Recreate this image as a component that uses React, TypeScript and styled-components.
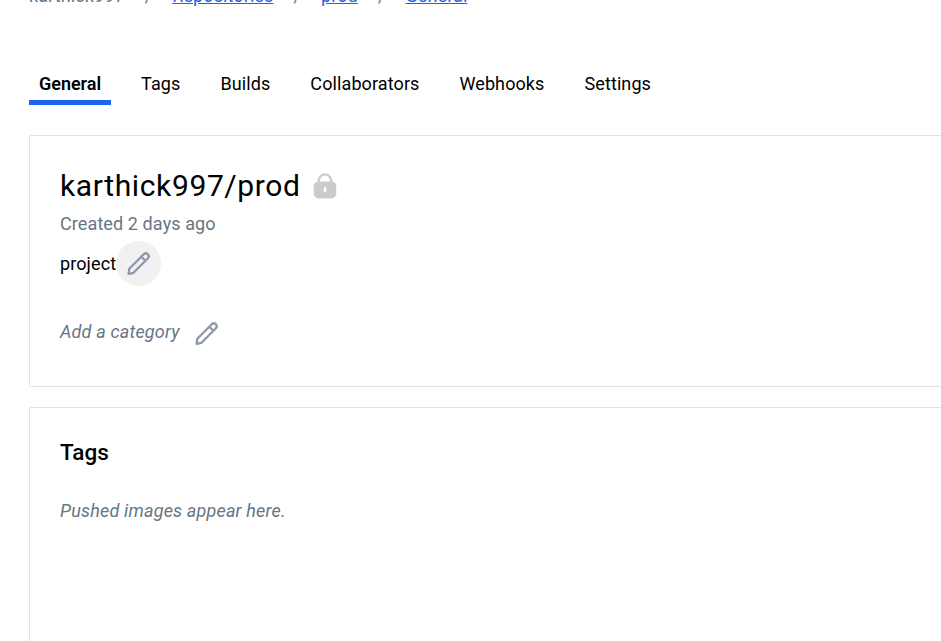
import React from "react";
import styled, { createGlobalStyle } from "styled-components";

const GlobalStyle = createGlobalStyle`
  * { box-sizing: border-box; }
  body { margin: 0; background: #fff; color: #000; font-family: Roboto, sans-serif; font-size: 18px; letter-spacing: 0.1px; overflow: hidden; }
`;
const Page = styled.main`width: 941px; height: 641px; overflow: hidden; padding-left: 29px;`;
const Crumbs = styled.nav`display: flex; height: 65px; margin-top: -15px; line-height: 21px; color: #677584; white-space: pre;`;
const CrumbLink = styled.a`color: #1d63ed; text-decoration: underline;`;
const Slash = styled.span`width: 47.6px; text-align: center;`;
const Tabs = styled.nav`display: flex; height: 55px; margin-bottom: 30px;`;
const Tab = styled.a<{ $active?: boolean }>`
  height: 55px; padding: 23px 10px 0; margin-right: 20px; line-height: 21px;
  font-weight: ${p => (p.$active ? 600 : 400)};
  letter-spacing: ${p => (p.$active ? -0.02 : 0.1)}px;
  border-bottom: 5px solid ${p => (p.$active ? "#1d63ed" : "transparent")};
`;
const Card = styled.section<{ $height: number }>`
  width: 1000px; height: ${p => p.$height}px; margin-bottom: 20px; padding: 29px 30px;
  border: 1px solid #e1e2e6; border-radius: 2px;
`;
const TitleRow = styled.div`display: flex; align-items: center; height: 42px; gap: 12px;`;
const Title = styled.h1`margin: -2px 0 0; font-size: 30px; font-weight: 400; letter-spacing: 0.62px;`;
const Created = styled.p`margin: 6px 0 7px; line-height: 21px; color: #677584;`;
const Row = styled.div`display: flex; align-items: center; height: 45px;`;
const EditButton = styled.button<{ $filled?: boolean }>`
  width: 45px; height: 45px; padding: 0; border: 0; border-radius: 50%; display: grid; place-items: center;
  background: ${p => (p.$filled ? "#f1f1f1" : "transparent")};
`;
const Category = styled(Row)`margin-top: 23px; gap: 4px; & > button { margin-top: 3px; }`;
const Hint = styled.span`font-style: italic; color: #677584; letter-spacing: 0.18px;`;
const Heading = styled.h2`margin: 0 0 33px; font-size: 22.5px; font-weight: 500; line-height: 30px; letter-spacing: 0;`;

const Pencil = () => (
  <svg width="27" height="27" viewBox="0 0 27 27" fill="none" stroke="#8f97ab" strokeWidth="2.3" strokeLinejoin="round">
    <path d="M3.6 23.8 4.3 18.7 18.8 4.2a2.9 2.9 0 0 1 4.1 4.1L8.5 22.8ZM16.3 6.7l4.1 4.1" />
  </svg>
);
const Lock = () => (
  <svg width="24" height="26" viewBox="0 0 24 26">
    <path d="M5.8 11V7.6a6.2 6.2 0 0 1 12.4 0V11" fill="none" stroke="#cbcbcb" strokeWidth="2.3" />
    <rect x="0.7" y="8.4" width="22.6" height="17" rx="5" fill="#cbcbcb" />
    <rect x="10.8" y="14.3" width="2.5" height="5" rx="0.8" fill="#fff" />
  </svg>
);

export default function App() {
  return (
    <Page>
      <GlobalStyle />
      <Crumbs>
        <span>karthick997</span><Slash>/</Slash><CrumbLink>Repositories</CrumbLink><Slash>/</Slash>
        <CrumbLink>prod</CrumbLink><Slash>/</Slash><CrumbLink>General</CrumbLink>
      </Crumbs>
      <Tabs>
        <Tab $active>General</Tab><Tab>Tags</Tab><Tab>Builds</Tab><Tab>Collaborators</Tab><Tab>Webhooks</Tab><Tab>Settings</Tab>
      </Tabs>
      <Card $height={252}>
        <TitleRow><Title>karthick997/prod</Title><Lock /></TitleRow>
        <Created>Created 2 days ago</Created>
        <Row><span>project</span><EditButton $filled aria-label="Edit description"><Pencil /></EditButton></Row>
        <Category><Hint>Add a category</Hint><EditButton aria-label="Edit category"><Pencil /></EditButton></Category>
      </Card>
      <Card $height={300}>
        <Heading>Tags</Heading>
        <Hint>Pushed images appear here.</Hint>
      </Card>
    </Page>
  );
}
